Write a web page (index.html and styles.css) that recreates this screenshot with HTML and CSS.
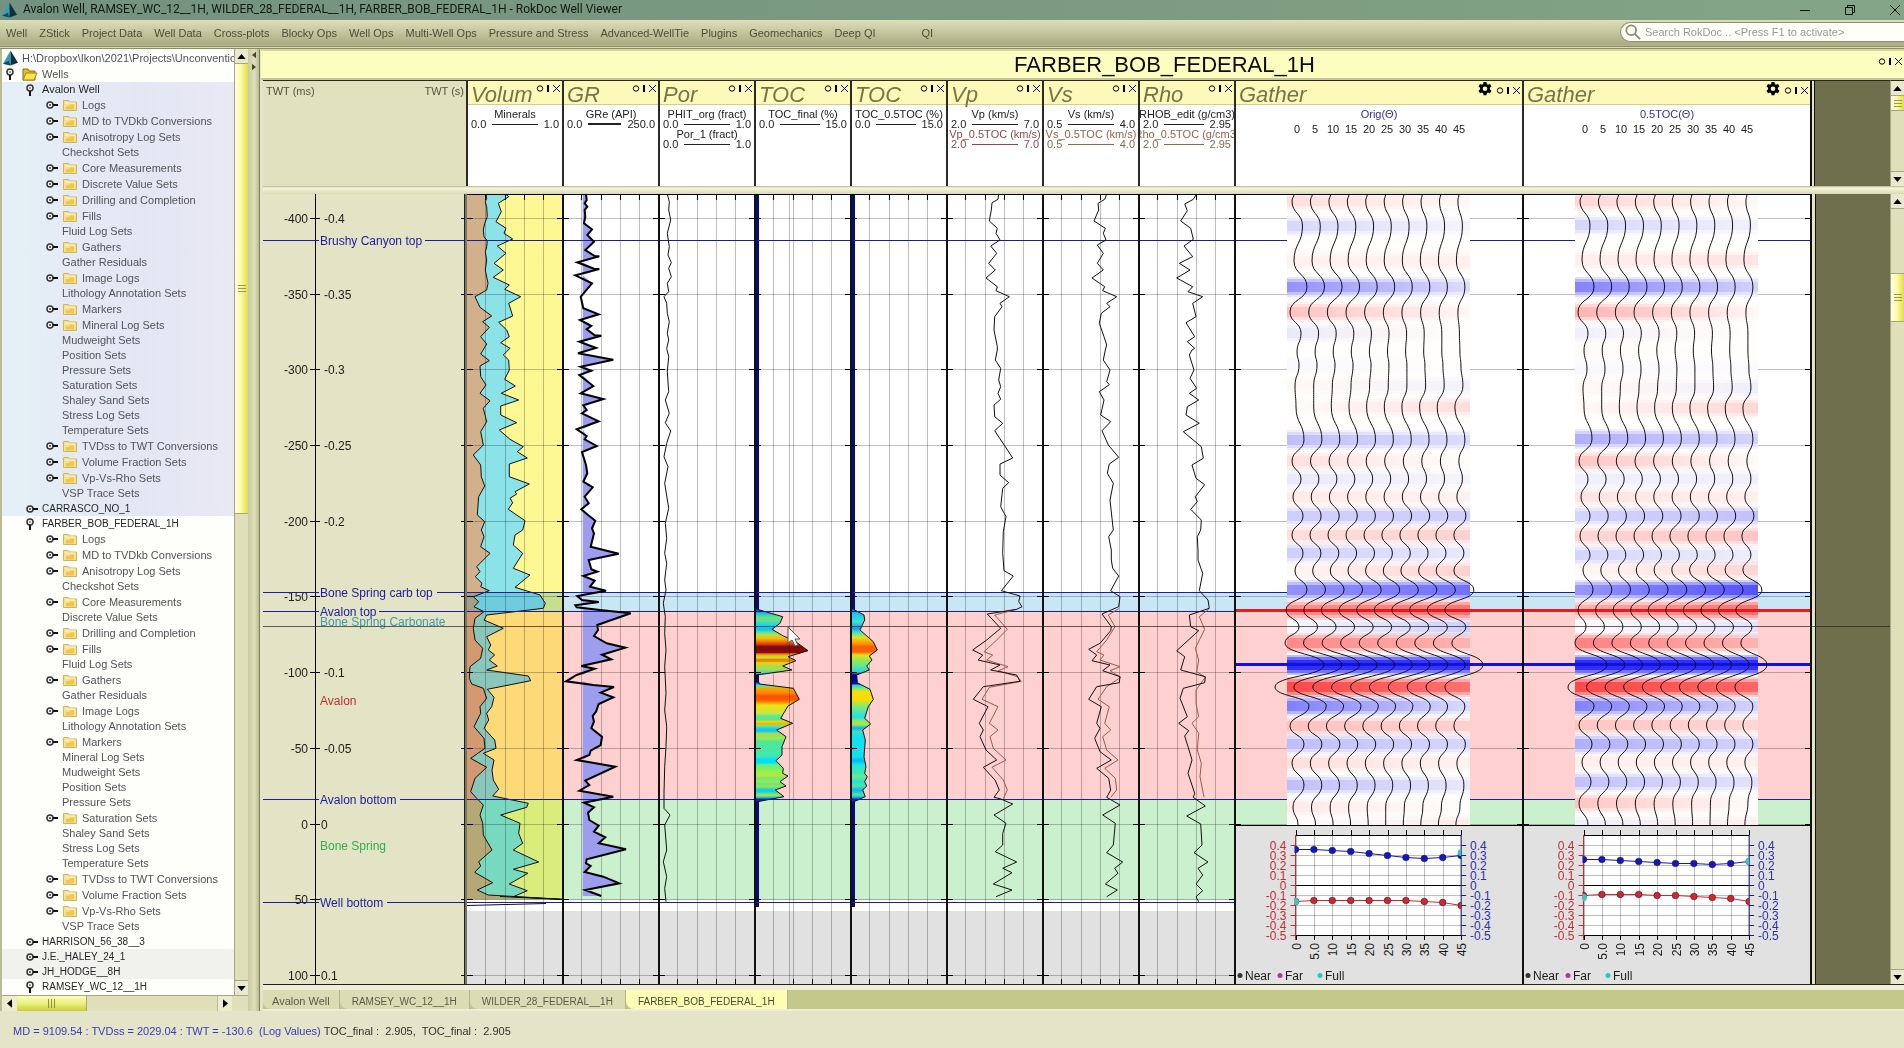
FILE: index.html
```html
<!DOCTYPE html>
<html lang="en">
<head>
<meta charset="utf-8">
<title>RokDoc Well Viewer</title>
<link rel="stylesheet" href="styles.css">
</head>
<body>
<svg class="defs" aria-hidden="true">
  <symbol id="i-logo" viewBox="0 0 16 16"><path d="M8 0 0 14l8 2z" fill="#2fa3b5"/><path d="M8 0l8 13-8 3z" fill="#12303f"/><path d="M0 14l6-3 2 5z" fill="#0d4a6a"/></symbol>
  <symbol id="i-up" viewBox="0 0 10 6"><path d="M0 6 5 0l5 6z"/></symbol>
  <symbol id="i-down" viewBox="0 0 10 6"><path d="M0 0 5 6l5-6z"/></symbol>
  <symbol id="i-left" viewBox="0 0 6 10"><path d="M6 0 0 5l6 5z"/></symbol>
  <symbol id="i-right" viewBox="0 0 6 10"><path d="M0 0 6 5l-6 5z"/></symbol>
  <symbol id="i-ctl" viewBox="0 0 24 9"><circle cx="4" cy="4.500" r="2.700" fill="none" stroke="#000"/><path d="M11 1h2v7h-2z"/><path d="M17 1l7 7m0-7-7 7" stroke="#000" fill="none"/></symbol>
  <symbol id="i-gear" viewBox="0 0 24 24"><path fill-rule="evenodd" d="M9.500 0h5l.7 3.500 2 1.100L20.600 3.400l2.500 4.300L20.400 10v2.600l2.700 2.300-2.500 4.300-3.400-1.200-2 1.100-.7 3.500h-5l-.7-3.500-2-1.100-3.400 1.200-2.500-4.300L3.600 12.600V10L.9 7.700l2.500-4.300 3.400 1.200 2-1.100zM12 7.500a4 4 0 100 8 4 4 0 000-8z"/></symbol>
  <symbol id="i-folder" viewBox="0 0 14 12"><path d="M.5 1.500h5l1 1.500h7v8.500H.5z" fill="#f7e08a" stroke="#d0b465"/><path d="M3 10.500V7h3l1-1.500h4v5z" fill="#ecc94e"/><path d="M2 4h10" stroke="#fff6c8"/></symbol>
  <symbol id="i-open" viewBox="0 0 16 13"><path d="M1 12V1h5l1 2h6v9z" fill="#e8bd20" stroke="#8a6d10"/><path d="M1 12 4 5h11l-3 7z" fill="#ffe14a" stroke="#a5831a"/></symbol>
  <symbol id="i-shut" viewBox="0 0 12 8"><circle cx="4" cy="4" r="3" fill="#fff" stroke="#333" stroke-width="1.500"/><path d="M3 4h2M4 3v2" stroke="#333"/><path d="M7 4h5" stroke="#111" stroke-width="2"/></symbol>
  <symbol id="i-knob" viewBox="0 0 8 12"><circle cx="4" cy="4" r="3" fill="#fff" stroke="#333" stroke-width="1.500"/><path d="M3 4h2" stroke="#333"/><path d="M4 7v5" stroke="#111" stroke-width="2"/></symbol>
</svg>

<header class="titlebar">
  <svg class="logo"><use href="#i-logo"/></svg>
  <h1>Avalon Well, RAMSEY_WC_12__1H, WILDER_28_FEDERAL__1H, FARBER_BOB_FEDERAL_1H - RokDoc Well Viewer</h1>
  <div class="win">
    <button aria-label="Minimize"><svg viewBox="0 0 10 10"><path d="M0 5.500h10"/></svg></button>
    <button aria-label="Restore"><svg viewBox="0 0 10 10"><path d="M.5 2.500h7v7h-7zM2.500 2V.5h7v7H8"/></svg></button>
    <button aria-label="Close"><svg viewBox="0 0 10 10"><path d="M0 0l10 10M10 0 0 10"/></svg></button>
  </div>
</header>

<nav class="menubar">
  <div class="menus">
    <button>Well</button><button>ZStick</button><button>Project Data</button><button>Well Data</button><button>Cross-plots</button><button>Blocky Ops</button><button>Well Ops</button><button>Multi-Well Ops</button><button>Pressure and Stress</button><button>Advanced-WellTie</button><button>Plugins</button><button>Geomechanics</button><button>Deep QI</button><button class="apart">QI</button>
  </div>
  <label class="search">
    <svg viewBox="0 0 18 18"><circle cx="7" cy="7" r="5.500"/><path d="M11 11l6 6"/></svg>
    <input type="text" aria-label="Search" placeholder="Search RokDoc .. &lt;Press F1 to activate&gt;">
  </label>
</nav>

<main class="main">
  <aside class="side">
    <ul class="tree" id="tree"></ul>
    <div class="vbar side-v">
      <button aria-label="Scroll up"><svg><use href="#i-up"/></svg></button>
      <div class="thumb side-thumb"></div>
      <div class="trough"></div>
      <button aria-label="Scroll down"><svg><use href="#i-down"/></svg></button>
    </div>
    <div class="hbar">
      <button aria-label="Scroll left"><svg><use href="#i-left"/></svg></button>
      <div class="hthumb"></div>
      <div class="htrough"></div>
      <button aria-label="Scroll right"><svg><use href="#i-right"/></svg></button>
    </div>
  </aside>
  <div class="split">
    <svg><use href="#i-left"/></svg>
    <svg><use href="#i-right"/></svg>
  </div>
  <section class="viewer">
    <div class="well-title">
      <h2>FARBER_BOB_FEDERAL_1H</h2>
      <button class="ctl" aria-label="Window options"><svg><use href="#i-ctl"/></svg></button>
    </div>
    <div class="heads">
      <div class="axis-head"><span>TWT (ms)</span><span>TWT (s)</span></div>
      <div class="tracks" id="heads"></div>
      <div class="edge"></div>
      <div class="void"></div>
      <div class="vbar">
        <button aria-label="Scroll up"><svg><use href="#i-up"/></svg></button>
        <div class="thumb head-thumb"></div>
        <div class="trough"></div>
        <button aria-label="Scroll down"><svg><use href="#i-down"/></svg></button>
      </div>
    </div>
    <div class="rule"></div>
    <div class="body">
      <div class="canvas"><svg class="plot" id="plot" role="img" aria-label="Well log tracks"></svg></div>
      <div class="vbar">
        <button aria-label="Scroll up"><svg><use href="#i-up"/></svg></button>
        <div class="trough before"></div>
        <div class="thumb body-thumb"></div>
        <div class="trough"></div>
        <button aria-label="Scroll down"><svg><use href="#i-down"/></svg></button>
      </div>
    </div>
    <div class="tabs">
      <button>Avalon Well</button><button class="caps">RAMSEY_WC_12__1H</button><button class="caps">WILDER_28_FEDERAL__1H</button><button class="caps on">FARBER_BOB_FEDERAL_1H</button>
    </div>
  </section>
</main>

<footer class="status"><span class="pos">MD = 9109.54 : TVDss = 2029.04 : TWT = -130.6&nbsp; (Log Values)</span><span>TOC_final :&nbsp; 2.905,&nbsp; TOC_final :&nbsp; 2.905</span></footer>
<script src="script.js"></script>
</body>
</html>
```
FILE: styles.css
```css
* { box-sizing: border-box; }
body {
  margin: 0; height: 100vh; display: flex; flex-direction: column; overflow: hidden;
  font: 11px/15px "Liberation Sans", Arial, sans-serif; color: #3c3c32; background: #e4e4c8;
}
button { font: inherit; color: inherit; border: 0; padding: 0; margin: 0; background: none; display: block; }
h1, h2, ul { margin: 0; padding: 0; font-weight: normal; }
.defs { position: absolute; width: 0; height: 0; }

.titlebar { display: flex; align-items: center; height: 20px; flex: none; padding-left: 2px; background: linear-gradient(90deg, #739380, #7c9b80 60%, #84a587); color: #10180f; }
.logo { width: 15px; height: 16px; margin-right: 6px; }
.titlebar h1 { font: 12px/18px Roboto, "Noto Sans", sans-serif; flex: 1; white-space: nowrap; height: 20px; }
.win { display: flex; gap: 35px; padding-right: 4px; }
.win svg { display: block; width: 10px; height: 10px; fill: none; stroke: #0c120c; overflow: visible; }

.menubar { display: flex; justify-content: space-between; height: 29px; flex: none; background: linear-gradient(#dedfb9, #aaad82 24px, #b0b38c 25px); border-bottom: 3px double #8c8f62; }
.menus { display: flex; gap: 12px; padding-left: 6px; color: #4c4e38; line-height: 26px; }
.apart { margin-left: 34px; }
.search { display: flex; align-items: center; width: 284px; height: 20px; margin-top: 2px; padding-left: 4px; background: #fffffa; border-radius: 10px 0 0 10px; border: 1px solid #8f9168; border-right: 0; }
.search svg { width: 16px; height: 16px; margin-right: 4px; fill: none; stroke: #8a8a76; stroke-width: 2; }
.search input { flex: 1; min-width: 0; border: 0; background: none; font: inherit; padding: 0; outline: 0; }
.search input::placeholder { color: #999; }

.main { flex: 1; min-height: 0; display: grid; grid-template-columns: 248px 12px 1fr; }
.side { display: grid; grid-template: 1fr 16px / 1fr 14px; min-height: 0; border-left: 2px solid #b9bb92; background: #e4e4c8; }
.tree { list-style: none; overflow: hidden; min-height: 0; padding-top: 1px; background: #fefffa; color: #53535a; }
.tree li { display: flex; align-items: center; height: 15px; white-space: nowrap; }
.tree li.tall { height: 16px; }
.tree li.blue { background: linear-gradient(90deg, #e4f0f6, #e5e6f4 60%, #e9e9f4); }
.tree li.grey { background: #f1f1ee; }
.tree li.well { color: #25252a; padding-left: 24px; }
.tree li.caps { font-size: 10px; }
.tree li.item { padding-left: 44px; }
.tree li.leaf { padding-left: 60px; }
.tree li.root { padding-left: 1px; }
.tree li.wells { padding-left: 4px; }
.tree .shut { width: 12px; height: 8px; margin-right: 5px; }
.well .shut { margin: 0 4px 0 0; }
.tree .knob { width: 8px; height: 12px; margin-right: 8px; }
.tree .folder { width: 14px; height: 12px; margin-right: 5px; }
.tree .open { width: 16px; height: 13px; margin-right: 4px; }
.tree .logo { margin-right: 4px; flex: none; }

.vbar { display: flex; flex-direction: column; width: 14px; background: #dfe0ba; border-left: 1px solid #a5a77c; }
.vbar button { height: 15px; flex: none; background: #e9e9cd; border-bottom: 1px solid #a5a77c; }
.vbar button:last-child { border-top: 1px solid #a5a77c; border-bottom: 0; }
.vbar button svg { width: 9px; height: 5px; display: block; margin: auto; }
.thumb { background: linear-gradient(90deg, #fffff0, #fafa9a 50%, #dede4c); border-bottom: 1px solid #a5a77c; display: grid; place-items: center; }
.thumb::after { content: ""; width: 8px; height: 7px; background: repeating-linear-gradient(#9a9a50 0 1px, transparent 1px 3px); }
.trough { flex: 1; background: #dfe0ba; }
.side-thumb { height: 450px; }
.head-thumb { height: 15px; }
.before { flex: none; height: 64px; }
.body-thumb { height: 49px; border-top: 1px solid #a5a77c; }
.hbar { grid-column: 1 / 3; display: flex; background: #dfe0ba; border-top: 1px solid #a5a77c; }
.hbar button { width: 15px; background: #ecedcf; }
.hbar svg { width: 5px; height: 9px; display: block; margin: auto; }
.hthumb { width: 70px; background: repeating-linear-gradient(90deg, #8f9138 0 1px, transparent 1px 3px) center / 7px 9px no-repeat, linear-gradient(#fcfcc0, #ebf07a 50%, #c8cf3c); border-right: 1px solid #a5a77c; }
.htrough { flex: 1; }
.hbar button:last-child { margin-right: 16px; border-left: 1px solid #b9bb92; }

.split { background: linear-gradient(90deg, #c9cba4, #dfe0ba 60%, #b9bb92); border-right: 1px solid #7e8058; padding: 2px 2px; }
.split svg { display: block; width: 4px; height: 8px; margin: 0 0 4px 2px; fill: #45462c; }

.viewer { display: flex; flex-direction: column; min-width: 0; min-height: 0; padding-left: 3px; background: #e4e4c8; }
.well-title { display: flex; align-items: center; height: 31px; flex: none; margin-left: -2px; padding-left: 164px; background: #fdfdbf; border-top: 2px solid #d6d7a4; border-bottom: 2px solid #c5c69a; color: #0b0b08; }
.well-title h2 { flex: 1; text-align: center; font-size: 22px; line-height: 26px; margin-right: -26px; }
.ctl svg { display: block; width: 24px; height: 9px; }
.well-title .ctl { margin: 0 2px 6px 0; }
.heads { display: flex; height: 106px; flex: none; }
.heads > * { border-top: 1px solid #2a2a1c; }
.axis-head { width: 203px; display: flex; justify-content: space-between; padding: 3px 2px 0 3px; background: #e1e1c0; color: #55553f; }
.tracks { display: flex; }
.head { width: 96px; overflow: hidden; background: #fff; border-left: 2px solid #2a2a26; color: #222; }
.head.wide { width: 288px; }
.head header { display: flex; align-items: flex-start; justify-content: space-between; height: 24px; padding: 1px 2px 0 3px; background: #fdfab9; border-bottom: 1px solid #cfcf94; }
.head h3 { margin: 0; font: italic 22px/26px "Liberation Sans", Arial, sans-serif; color: #77744a; width: 0; }
.head .tools { display: flex; gap: 4px; }
.head .gear { width: 14px; height: 14px; display: block; }
.head .ctl { padding-top: 2px; }
.curve { line-height: 10px; white-space: nowrap; }
.curve:nth-of-type(1) { margin-top: 4px; }
.curve p { margin: 0 -10px; text-align: center; }
.curve div { display: flex; align-items: center; padding: 0 3px 0 3px; }
.curve i { flex: 1; height: 1px; margin: 0 6px; background: currentColor; }
.curve i.thick { height: 2px; }
.curve.maroon { color: #8c4a50; }
.curve.brown { color: #94664e; }
.angle { text-align: center; color: #33339a; margin: 2px 0 0; line-height: 15px; }
.scale { display: grid; grid-template-columns: repeat(10, 18px); justify-content: center; text-align: center; line-height: 15px; }
.head .scale { padding-right: 2px; }
.edge { width: 5px; border-left: 2px solid #111; border-right: 1px solid #111; background: #e4e4c8; }
.void { flex: 1; background: #706f4d; }
.rule { height: 8px; flex: none; background: linear-gradient(#b5b68c, #f6f6e0 2px, #d9dab2); }
.body { flex: 1; min-height: 0; display: flex; border-bottom: 1px solid #222; }
.canvas { flex: 1; min-width: 0; overflow: hidden; background: #706f4d; }
.plot { display: block; width: 100%; height: 792px; font-size: 12px; }
.tabs { display: flex; height: 26px; flex: none; background: #c3c98a; border-top: 5px solid #eeeed6; border-bottom: 2px solid #efefd8; color: #5a5b46; }
.tabs button { padding: 3px 9px 0; background: #dbdcb4; border-right: 1px solid #b4b68a; border-radius: 0 0 0 8px; }
.tabs .caps { font-size: 10px; padding: 3px 12px 0; }
.tabs .on { background: #fdfdb4; color: #4a4b38; }
.status { height: 37px; flex: none; padding: 0 13px; display: flex; gap: 3px; line-height: 40px; color: #33332a; white-space: nowrap; }
.pos { color: #3a3ac0; }

.plot text { fill: #1c1c18; }
.plot .end { text-anchor: end; }
.plot .navy { fill: #1c1c9c; }
.plot .teal { fill: #3f9aac; }
.plot .red { fill: #c03030; }
.plot .green { fill: #35ae4c; }
.plot .blue { fill: #3030a8; }
.grid { stroke: #000; stroke-opacity: .25; fill: none; }
.tick { stroke: #000; fill: none; }
.bar { stroke: #111; stroke-width: 2; fill: none; }
.marker { stroke: #1c1c9c; stroke-width: 1; fill: none; }
.log { fill: none; stroke: #111; stroke-width: 1; }
.log.heavy { stroke: #000; stroke-width: 2; }
.log.soft { stroke: #9c5a4c; }
.zone { mix-blend-mode: multiply; }
```
FILE: script.js
```js
/* ---------- project tree ---------- */
const use = (cls, id) => `<svg class="${cls}"><use href="#i-${id}"/></svg>`;
const items = ['Logs', 'MD to TVDkb Conversions', 'Anisotropy Log Sets', 'Checkshot Sets', 'Core Measurements',
  'Discrete Value Sets', 'Drilling and Completion', 'Fills', 'Fluid Log Sets', 'Gathers', 'Gather Residuals', 'Image Logs',
  'Lithology Annotation Sets', 'Markers', 'Mineral Log Sets', 'Mudweight Sets', 'Position Sets', 'Pressure Sets',
  'Saturation Sets', 'Shaley Sand Sets', 'Stress Log Sets', 'Temperature Sets', 'TVDss to TWT Conversions',
  'Volume Fraction Sets', 'Vp-Vs-Rho Sets', 'VSP Trace Sets'];
const folders = {
  avalon: [0, 1, 2, 4, 5, 6, 7, 9, 11, 13, 14, 22, 23, 24],
  farber: [0, 1, 2, 4, 6, 7, 9, 11, 13, 18, 22, 23, 24]
};
const branch = (key, tint) => items.map((t, i) => folders[key].includes(i)
  ? `<li class="item tall ${tint}">${use('shut', 'shut')}${use('folder', 'folder')}${t}</li>`
  : `<li class="leaf ${tint}">${t}</li>`).join('');
const well = (t, icon, tint = '') => `<li class="well ${/[a-z]/.test(t) ? '' : 'caps'} ${tint}">${use(icon, icon)}${t}</li>`;
document.getElementById('tree').innerHTML =
  `<li class="root tall">${use('logo', 'logo')}H:\\Dropbox\\Ikon\\2021\\Projects\\Unconventional</li>` +
  `<li class="wells tall">${use('knob', 'knob')}${use('open', 'open')}Wells</li>` +
  well('Avalon Well', 'knob', 'blue') + branch('avalon', 'blue') +
  well('CARRASCO_NO_1', 'shut', 'blue') + well('FARBER_BOB_FEDERAL_1H', 'knob') + branch('farber', '') +
  well('HARRISON_56_38__3', 'shut') + well('J.E._HALEY_24_1', 'shut', 'grey') +
  well('JH_HODGE__8H', 'shut', 'grey') + well('RAMSEY_WC_12__1H', 'knob');

/* ---------- track headers ---------- */
const tracks = [
  ['Volum', ['Minerals', '0.0', '1.0']],
  ['GR', ['GRe (API)', '0.0', '250.0', '', 'thick']],
  ['Por', ['PHIT_org (fract)', '0.0', '1.0'], ['Por_1 (fract)', '0.0', '1.0']],
  ['TOC', ['TOC_final (%)', '0.0', '15.0']],
  ['TOC', ['TOC_0.5TOC (%)', '0.0', '15.0']],
  ['Vp', ['Vp (km/s)', '2.0', '7.0'], ['Vp_0.5TOC (km/s)', '2.0', '7.0', 'maroon']],
  ['Vs', ['Vs (km/s)', '0.5', '4.0'], ['Vs_0.5TOC (km/s)', '0.5', '4.0', 'brown']],
  ['Rho', ['RHOB_edit (g/cm3)', '2.0', '2.95'], ['Rho_0.5TOC (g/cm3)', '2.0', '2.95', 'brown']]
];
const angles = [0, 5, 10, 15, 20, 25, 30, 35, 40, 45];
const ctl = '<button class="ctl" aria-label="Track options"><svg><use href="#i-ctl"/></svg></button>';
document.getElementById('heads').innerHTML = tracks.map(([t, ...cs]) =>
  `<div class="head"><header><h3>${t}</h3>${ctl}</header>` + cs.map(([n, a, b, tone = '', w = '']) =>
    `<section class="curve ${tone}"><p>${n}</p><div>${a}<i class="${w}"></i>${b}</div></section>`).join('') + '</div>').join('') +
  ['Orig(Θ)', '0.5TOC(Θ)'].map(n =>
    `<div class="head wide"><header><h3>Gather</h3><div class="tools"><button aria-label="Settings">${use('gear', 'gear')}</button>${ctl}</div></header>
     <p class="angle">${n}</p><div class="scale">${angles.map(a => `<span>${a}</span>`).join('')}</div></div>`).join('');

/* ---------- log data: runs of x,y pairs, each run with its own origin, in thirds of a pixel ---------- */
const run = (ox, oy, s) => s.trim().split(/\s+/).map(p => { const [x, y] = p.split(','); return [ox + x / 3, oy + y / 3]; });
const line = pts => 'M' + pts.map(p => p[0].toFixed(1) + ' ' + p[1].toFixed(1)).join('L');

const clay = [
  ...run(460, 70, '78,373 80,385 76,395 80,410 82,440 74,460 70,480 72,500 82,512 80,530 76,545 80,570 76,600 84,640 80,660 45,680 60,712 95,738 68,755 88,772 62,800 80,822'),
  ...run(460, 350, '62,12 88,32 60,48 62,80 78,105 60,130 90,152 70,175 80,215 62,245 70,285 40,315 62,345 64,380 74,408 56,440 52,495 74,515 64,540 72,560 62,590 90,610 50,650 60,665 46,680 66,700 62,710'),
  ...run(460, 560, '88,92 40,110 56,125 42,140 72,155 45,175 40,205 45,240 68,265 62,295 30,320 28,355 35,372 70,385 80,415 60,440 62,460 42,500 72,535 75,565 32,595 80,622 45,655 32,695 50,715 70,735 60,765 68,790 70,825 96,870 56,905 62,918 44,937 98,968 52,990 85,1005 306,1018')];
const carb = [
  ...run(460, 70, '138,373 146,380 115,400 124,425 108,455 138,475 132,490 158,507 112,528 138,550 102,580 130,600 100,622 148,645 134,658 182,680 146,700 158,738 116,757 140,780 148,800 122,818 150,835'),
  ...run(460, 350, '130,15 146,30 148,60 134,88 166,108 124,130 176,150 122,168 122,195 170,218 118,240 150,268 190,290 172,305 202,324 148,342 148,380 208,402 165,425 170,432 150,445 158,458 145,478 195,512 188,540 165,555 160,585 188,610 160,655 210,675 165,712'),
  ...run(460, 560, '240,105 256,130 250,145 80,165 72,180 130,205 80,230 92,255 85,270 104,285 88,300 112,318 80,330 205,348 212,362 82,388 102,412 95,440 80,460 86,480 72,505 104,540 108,565 70,580 102,600 96,630 100,660 116,688 98,708 205,730 200,742 122,765 180,790 176,820 188,850 160,870 236,906 160,928 204,940 148,972 202,992 160,1010 306,1018')];
const gr = [
  ...run(460, 70, '378,373 380,390 374,400 382,410 374,420 376,440 372,460 396,478 382,495 402,515 376,540 404,558 418,559 352,577 402,596 418,597 346,616 396,640 362,680 370,715 416,733 360,750 394,768 380,778 404,796 424,797 358,815 408,834'),
  ...run(460, 350, '354,10 460,29 362,50 394,62 358,75 400,108 362,130 430,147 370,166 380,180 366,190 416,214 350,238 380,258 374,268 410,288 366,306 378,345 382,370 370,395 398,412 374,440 386,460 364,478 384,495 406,512 396,535 402,550 392,590 476,611 386,630'),
  ...run(460, 560, '394,28 412,35 370,48 404,62 390,80 438,92 352,108 366,120 416,126 346,136 350,142 420,150 512,160 412,195 414,210 402,228 440,250 496,263 426,284 454,298 364,318 404,326 350,345 318,364 400,375 462,381 422,398 460,412 416,432 408,455 398,468 402,485 394,505 426,530 422,555 392,572 388,585 350,600 466,620 376,662 388,675 358,692 460,710 372,728 402,742 384,758 388,780 416,797 402,815 436,832 416,850 498,868 380,898 378,910 392,918 374,936 430,950 478,970 376,990 424,1008')];
const por = [
  ...run(460, 70, '622,373 628,395 626,420 632,450 622,490 628,530 624,555 634,578 626,595 634,620 622,640 626,665 612,680 620,700 622,730 628,755 622,790 626,810 620,835'),
  ...run(460, 350, '626,20 622,65 626,125 616,150 628,190 616,218 632,243 620,280 612,320 624,350 614,400 626,475 616,520 620,565 614,610'),
  ...run(460, 560, '620,10 614,60 618,90 610,130 616,170 614,220 618,270 614,320 618,400 614,450 620,500 618,560 614,620 612,700 612,745 630,765 614,795 620,870 610,905 620,950 614,985 618,1025')];
const vp = [
  ...run(940, 40, '176,462 174,478 156,488 154,510 148,543 172,565 168,580 180,600 152,618 170,640 146,670 166,690 138,714 172,740 168,752 208,770 180,790 186,800 164,830 162,870 172,920'),
  ...run(940, 350, '172,0 166,30 182,55 176,90 182,110 174,130 182,148 162,165 164,200 188,220 164,242 218,324 180,342 180,375 206,398 188,415 182,470 198,500 190,545 188,610'),
  ...run(940, 560, '192,32 220,48 184,92 240,108 236,125 246,140 230,148 142,162 182,205 140,240 98,270 128,285 114,300 180,315 152,330 230,345 240,364 130,380 100,418 144,440 118,490 130,510 120,530 138,570 170,600 130,622 165,660 178,690 162,712 180,716 218,732 162,765 198,790 188,820 188,855 166,875 230,906 188,925 216,938 160,972 216,990 168,1010')];
const vpSoft = run(940, 560, '230,148 164,165 202,208 160,250 132,275 158,285 140,300 204,320 175,332 232,350 244,364 148,382 126,418 174,440 148,490 174,510 150,530 160,565 198,600 156,622 190,660 202,690 190,716');
const vs = [
  ...run(940, 40, '500,462 494,478 474,490 476,510 462,543 496,565 490,580 498,600 472,615 490,640 472,670 490,690 456,714 494,740 488,752 530,770 500,790 510,800 484,820 478,850 492,890 500,915'),
  ...run(940, 350, '496,0 490,30 510,60 500,95 508,104 478,125 492,150 482,195 512,215 486,242 505,285 536,322 508,342 502,370 520,400 510,450 516,505 520,540 506,560 514,600'),
  ...run(940, 560, '514,0 518,25 536,48 512,92 540,110 536,140 486,162 514,200 512,212 480,250 446,268 470,285 456,302 510,315 488,332 540,350 538,368 470,380 446,418 484,440 470,490 480,505 464,535 480,575 514,600 470,625 506,655 512,690 500,712 540,735 488,765 526,790 520,855 500,878 548,906 524,925 534,940 496,972 532,990 500,1010')];
const vsSoft = run(940, 560, '536,146 505,165 525,200 500,240 470,275 492,285 480,300 540,320 510,332 542,352 500,380 474,418 508,440 494,490 512,510 488,530 500,570 534,600 494,625 526,655 530,690 512,712');
const rho = [
  ...run(940, 40, '770,462 760,478 734,492 742,512 722,543 752,565 760,598 732,618 758,650 718,670 750,690 710,714 758,740 744,755 788,770 758,790 768,830 738,848 764,890 742,905 764,925'),
  ...run(940, 350, '756,0 748,15 762,60 750,85 770,115 748,130 776,150 742,170 738,195 778,220 730,245 784,290 790,325 756,345 768,385 794,404 766,440 772,455 752,478 784,510 782,540 772,560 774,600'),
  ...run(940, 560, '774,0 788,40 778,92 804,120 808,145 748,165 752,200 776,212 710,272 734,290 722,330 796,350 794,368 730,385 720,415 742,470 716,490 746,512 734,528 744,560 756,600 744,640 764,700 760,712 796,738 740,768 782,792 786,855 762,878 804,906 774,925 788,945 768,972 788,992 768,1010 776,1025')];
const rhoSoft = run(940, 560, '806,148 778,170 794,208 766,265 776,300 770,335 796,352 768,390 768,430 776,470 756,490 776,520 772,570 784,610 780,650 792,712');
const tocA = run(460, 560, '892,148 968,170 960,190 936,208 970,228 1000,240 1044,272 984,290 1008,302 968,318 996,330 890,345 898,372 1000,385 1018,418 984,438 962,475 998,490 950,510 978,530 966,560 966,585 948,602 970,625 968,640 984,648 960,665 978,678 946,690 972,710 892,725');
const tocB = run(460, 560, '1180,148 1212,165 1214,180 1200,210 1240,245 1252,270 1228,288 1236,300 1220,318 1228,330 1190,345 1192,368 1230,388 1240,418 1225,440 1214,475 1232,492 1208,510 1216,540 1212,590 1218,620 1214,640 1222,650 1214,665 1220,678 1208,690 1216,710 1182,725');
const rampA = '148:0a3fc0 158:20b0e0 165:30d8c0 172:68e088 182:68e088 195:10d8f0 208:10c0f8 218:60e890 225:c0e040 235:f0c000 242:f09000 252:e04000 260:800808 278:801008 280:e05000 286:f0b800 293:c8e040 298:e88800 304:e88800 308:f0d010 320:a0e050 330:a8d850 340:18d8f0 346:0010a0 365:000890 370:1070e0 376:30e8e8 384:f0b000 400:ff8000 408:ff5000 420:f85800 428:ff9800 435:f0e010 460:c8e840 468:60e890 480:50e8a0 484:f0d800 492:f8b000 497:70e888 508:10c8f8 514:10c8f8 520:a0e050 535:98e858 545:50e898 590:40e8b0 598:00e0ff 608:00e0ff 614:60f080 642:a8f040 648:c0e040 655:60f080 665:a0e850 672:60e888 680:a8e040 688:10d0f0 696:10d0f0 700:50e890 706:c0e030 712:20c8e8 718:0830b0';
const rampB = '148:0a60d0 158:18c0f0 185:40e0d0 205:10a0f8 218:40e8c0 232:e8e020 250:ff9800 260:f86008 276:f86008 280:ff9800 286:e0e020 300:98e850 318:60e890 335:30d0e0 345:000890 370:000890 376:20d0f0 385:80e870 395:f0e010 420:ffd800 432:a0e850 450:60e8a0 470:20e0e8 486:a0e850 494:a0e850 504:10b0f8 515:40e0c0 530:10e0f0 590:10e0f0 602:00b8ff 615:20e8d8 640:40e8b0 650:70e888 665:20e0e0 678:50e8a0 690:10b0f8 705:50e8a0 712:10b0e8 718:0830b0';

/* seismic events: time position, near and far amplitude */
const events1 = [[194, -3, -1], [201, -5, -2], [226, 5.5, 2.5], [261, -3, -3.5], [287, 10, 5], [312, -7, -2], [333, 4, -.5], [352, 0, 0], [365, 2, 1], [386, -2, 3], [407, -1, -5], [440, 7, 5], [461, -5, -1], [479, 4, 2.5], [497, -4, -3], [516, 6, 6], [535, -5, -6], [553, 6, 4], [571, -2, -6], [590, 10, 14], [610, -11, -15], [627, 2, 6], [643, -12, -8], [665, 27, 23], [687, -22, -15], [706, 12, 5], [726, -7, -6], [744, 7, 5.5], [763, -5, -3], [785, 7, 4], [807, -4, 0], [825, 1, -4]];
const events2 = [[194, -3, -1], [201, -5, -2], [225, 5, 2.5], [260, -3, -4], [287, 9, 5], [312, -7, -2], [333, 3, 0], [350, -1, 0], [369, 2, 1], [388, -2, 3], [408, -1, -5], [439, 7, 5], [461, -6, -1], [479, 3, 3], [497, -4, -3], [516, 5, 6], [536, -5, -6], [555, 5, 3], [570, -2, -5], [590, 8, 14], [610, -7, -12], [627, 1, 4], [643, -10, -7], [665, 22, 19], [687, -17, -13], [706, 9, 5], [725, -6, -5], [744, 7, 5], [762, -3, -3], [782, 6, 4], [803, -6, 0], [825, 3, -3]];

/* ---------- drawing ---------- */
const L = 466, W = 96, TOP = 194, END = 985;
const times = [-400, -350, -300, -250, -200, -150, -100, -50, 0, 50, 100];
const ty = t => Math.floor(824 + t * 1.514) + .5;
const labelS = ['-0.4', '-0.35', '-0.3', '-0.25', '-0.2', '', '-0.1', '-0.05', '0', '', '0.1'];
let o = '<defs>';
const ramp = (id, s) => `<linearGradient id="${id}" gradientUnits="userSpaceOnUse" x1="0" x2="0" y1="${560 + 148 / 3}" y2="${560 + 718 / 3}">` +
  s.split(' ').map(p => { const [y, c] = p.split(':'); return `<stop offset="${((y - 148) / 570).toFixed(4)}" stop-color="#${c}"/>`; }).join('') + '</linearGradient>';
o += ramp('rampA', rampA) + ramp('rampB', rampB) + '</defs><g transform="translate(-263 -194)">';
const rect = (x, y, w, h, f, more = '') => `<rect x="${x}" y="${y}" width="${w}" height="${h}" fill="${f}" ${more}/>`;
const path = (d, c) => `<path class="${c}" d="${d}"/>`;
const text = (x, y, c, s) => `<text x="${x}" y="${y}" class="${c}">${s}</text>`;

o += rect(263, TOP, 203, 792, '#e3e3c5') + rect(467, TOP, 1344, 792, '#fff') + rect(467, 911, 1344, 75, '#e1e1e2');
const area = (pts, x, f) => `<path fill="${f}" d="${line([[x, pts[0][1]], ...pts, [x, pts[pts.length - 1][1]]])}Z"/>`;
o += rect(467, TOP, 96, 705, '#fdf893') + area(carb, 467, '#8be3e8') + area(clay, 467, '#d3b08c');

/* grid */
let g = '', tk = '';
for (let k = 0; k < 8; k++) for (let j = 1; j < 5; j++) {
  const x = Math.round(L + k * W + j * 19.3) + .5;
  g += `M${x} ${TOP}V${END}`; tk += `M${x} ${TOP}v6M${x} ${END}v-6`;
}
times.forEach(t => {
  const y = ty(t);
  g += `M467 ${y}H1811`;
  for (let k = 0; k < 9; k++) tk += `M${L + k * W - 5} ${y}h12`;
  if (t < 10) tk += `M1517 ${y}h12M1805 ${y}h6`;
});
o += path(g, 'grid') + path(line(clay), 'log') + path(line(carb), 'log') + path('M467 905.500 L546 903.500 M563 899.500L500 896.500', 'log');

/* formation zones; the volume track takes a lighter tint */
o += rect(467, 592, 96, 19, '#c8e6f4', 'class="zone"') + rect(467, 611, 96, 188, '#ffdfce', 'class="zone"') + rect(467, 799, 96, 101, '#dcf4d4', 'class="zone"');
o += rect(563, 592, 1248, 19, '#c8e6f4', 'class="zone"') + rect(563, 611, 1248, 188, '#fed1d0', 'class="zone"') + rect(563, 799, 1248, 101, '#cbf0ce', 'class="zone"');

/* gamma ray fill and TOC fills */
const base = 582.7;
o += area(gr.map(([x, y]) => [Math.max(x, base), y]), base, '#9d9df0');
const toc = (pts, x, id) => rect(x, TOP, 4, 713, '#0a0a80') + area(pts, x, `url(#${id})`) + path(line(pts), 'log');
o += toc(tocA, 755, 'rampA') + toc(tocB, 851, 'rampB');

/* markers */
const marks = [[240, 'Brushy Canyon top', 425], [592, 'Bone Spring carb top', 437], [611, 'Avalon top', 379], [799, 'Avalon bottom', 400], [902, 'Well bottom', 387]];
marks.forEach(([y]) => { o += path(`M467 ${y + .5}H1815`, 'marker'); });
o += path(tk, 'tick') + path(line(gr), 'log heavy') + path(line(por), 'log');
[vpSoft, vsSoft, rhoSoft].forEach(c => { o += path(line(c), 'log soft'); });
[vp, vs, rho].forEach(c => { o += path(line(c), 'log'); });
o += path(`M789.500 ${TOP}V${END}`, 'grid');

/* gathers */
const horizons = [[609, '#ea1a1a'], [663, '#1212e0']];
const gather = (ev, left, first, gain, id) => {
  let s = rect(left, TOP, 183, 631, '#fffefc'), defs = '';
  ev.forEach(([y, a, b], i) => {
    if (y === 194) return;
    const c = v => v > 0 ? '#0000ff' : '#ff1010';
    const al = v => { const m = Math.abs(v); return Math.min(1, m * .04 * gain * Math.min(1, m / 9)).toFixed(2); };
    defs += `<linearGradient id="${id}${i}"><stop offset="0" stop-color="${c(a)}" stop-opacity="${al(a)}"/><stop offset="1" stop-color="${c(b)}" stop-opacity="${al(b)}"/></linearGradient>`;
    [[10, .25], [8, .4], [5, .6]].forEach(([r, op]) => {
      const t = Math.max(TOP, y - r);
      s += rect(left, t, 183, Math.min(825, y + r) - t, `url(#${id}${i})`, `opacity="${op}"`);
    });
  });
  horizons.forEach(([y, c]) => { s += rect(left - 52, y, 288, 3, c); });
  for (let k = 0; k < 10; k++) {
    const p = ev.map(([y, a, b]) => [first + k * 18.1 + a + (b - a) * k / 9, y]);
    let d = `M${p[0][0].toFixed(1)} ${p[0][1]}`;
    for (let i = 1; i < p.length; i++) {
      const m = (p[i][1] + p[i - 1][1]) / 2;
      d += `C${p[i - 1][0].toFixed(1)} ${m} ${p[i][0].toFixed(1)} ${m} ${p[i][0].toFixed(1)} ${p[i][1]}`;
    }
    s += path(d, 'log');
  }
  return `<defs>${defs}</defs>` + s;
};
o += gather(events1, 1287, 1297, 1, 'ga') + gather(events2, 1575, 1585, 1.3, 'gb');

/* amplitude against angle panels */
const avo = (left, x0, blue, red, full) => {
  const step = 18.4, x1 = x0 + 9 * step, y = v => 885.5 - v * 100;
  let s = rect(left, 825, 288, 160, '#e1e1e2') + path(`M${left} 825.500h288`, 'tick') + rect(x0, 835, x1 - x0, 100, '#fff');
  let a = '', b = '', lr = '', lb = '';
  for (let i = -5; i <= 5; i++) {
    const v = y(i / 10);
    a += `M${x0} ${v}H${x1}`;
    if (i < 5) {
      lr += `M${x0} ${v}h-5`; lb += `M${x1} ${v}h5`;
      const n = i ? (i / 10).toFixed(1) : '0';
      s += text(x0 - 9, v + 4, 'end red', n) + text(x1 + 9, v + 4, 'blue', n);
    }
  }
  for (let k = 0; k < 10; k++) {
    const x = Math.round(x0 + k * step) + .5;
    a += `M${x} 835V935`; b += `M${x} 830v5M${x} 935v5`;
    s += `<text class="end" transform="translate(${x + 4} 943) rotate(-90)">${k === 1 ? '5.0' : k * 5}</text>`;
  }
  s += path(a, 'grid') + path(b + `M${x0} 835.500H${x1}M${x0} 885.500H${x1}M${x0} 935.500H${x1}`, 'tick');
  s += `<path d="${lr}M${x0} 835V940" stroke="#c03030" fill="none"/><path d="${lb}M${x1} 835V935" stroke="#20206a" fill="none"/>`;
  s += `<clipPath id="c${left}"><rect x="${x0 - 1}" y="835" width="${x1 - x0 + 1}" height="100"/></clipPath><g clip-path="url(#c${left})">`;
  [[blue, '#1414c8'], [red, '#dc2230']].forEach(([v, c]) => {
    const p = v.map((q, k) => [x0 + k * step, y(q)]);
    s += `<path d="${line(p)}" fill="none" stroke="${c}"/>` + p.map(q => `<circle cx="${q[0]}" cy="${q[1]}" r="3.300" fill="${c}" stroke="#222" stroke-width=".6"/>`).join('');
  });
  s += `<circle cx="${x0}" cy="${y(full[0])}" r="3.500" fill="#35c9c0"/><circle cx="${x1}" cy="${y(full[1])}" r="3.500" fill="#35c9c0"/></g>`;
  [['Near', 5, '#333'], ['Far', 45, '#b03a90'], ['Full', 85, '#27c7bd']].forEach(([n, dx, c]) => {
    s += `<circle cx="${left + dx}" cy="975.500" r="2.500" fill="${c}"/>` + text(left + dx + 5, 980, '', n);
  });
  return s;
};
o += avo(1235, 1295.5, [.36, .36, .35, .34, .32, .30, .28, .27, .28, .30], [-.16, -.15, -.15, -.15, -.15, -.15, -.15, -.16, -.17, -.20], [-.16, .33]);
o += avo(1523, 1583.5, [.26, .26, .25, .24, .23, .22, .22, .21, .22, .24], [-.10, -.09, -.09, -.09, -.10, -.10, -.11, -.12, -.13, -.16], [-.12, .24]);

/* track borders and edges */
let bars = '';
for (let k = 1; k < 9; k++) bars += `M${L + k * W + 1} ${TOP}V${END}`;
o += path(bars + `M1523 ${TOP}V${END}M1811 ${TOP}V${END}`, 'bar') + path(`M467 ${TOP + .5}H1811M467 ${END - .5}H1811`, 'tick');
o += rect(1812, TOP, 3, 792, '#e4e4c8') + rect(1815, TOP, 1, 792, '#111') + rect(464, TOP, 3, 792, '#77766a') + rect(464, TOP, 1, 792, '#222');

/* time axis */
o += path(`M315.500 ${TOP}V${END}`, 'tick');
times.forEach((t, i) => {
  o += path(`M310 ${ty(t)}h10`, 'tick') + text(308, ty(t) + 4, 'end', t);
  if (labelS[i]) o += text(t < 0 ? 324 : 321, ty(t) + 4, '', labelS[i]);
});
marks.forEach(([y, n, e]) => { o += path(`M263 ${y + .5}H319M${e} ${y + .5}H464`, 'marker') + text(320, y + 5, 'navy', n); });
o += text(320, 626, 'teal', 'Bone Spring Carbonate') + text(320, 705, 'red', 'Avalon') + text(320, 850, 'green', 'Bone Spring');
o += '<path d="M263 626.500H4000" stroke="#222" stroke-opacity=".7"/>';
o += '<path d="M788 627v16l4-3 3 6 3-1-3-6h5z" fill="#fff" stroke="#555"/></g>';
document.getElementById('plot').innerHTML = o;
```
